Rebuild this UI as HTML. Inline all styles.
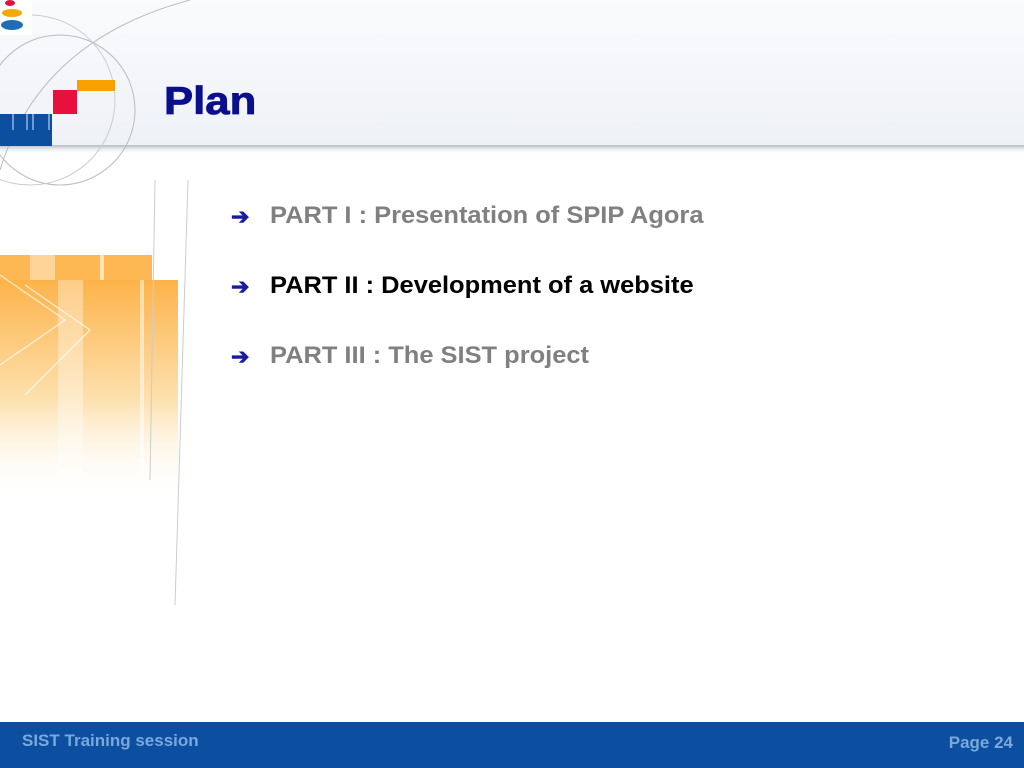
<!DOCTYPE html>
<html><head><style>
body{margin:0;width:1024px;height:768px;position:relative;overflow:hidden;background:#fff;font-family:"Liberation Sans",Arial,sans-serif}
.hdr{position:absolute;left:0;top:0;width:1024px;height:147px;background:linear-gradient(#fafbfd,#eef1f6);}
.sh{position:absolute;left:0;top:145px;width:1024px;height:8px;background:linear-gradient(#b8bcc4,#e8eaee 50%,#fff)}
.t{position:absolute;left:164px;top:80px;font-size:39px;font-weight:bold;color:#0a0f8c;transform:scaleX(1.12);transform-origin:left;-webkit-text-stroke:0.8px #0a0f8c}
.item{position:absolute;left:270px;font-size:24px;font-weight:bold;transform:scaleX(1.06);transform-origin:left;white-space:nowrap}
.a{position:absolute;left:231px;color:#1a1aa0;font-size:22px;font-weight:bold}
.ft{position:absolute;left:0;top:722px;width:1024px;height:46px;background:#0c4fa0}
.ft span{position:absolute;top:9px;color:#7aa8dc;font-size:17px;font-weight:bold}
</style></head><body>
<div class="hdr"></div>
<div class="sh"></div>
<svg style="position:absolute;left:0;top:0" width="300" height="620">
<defs><linearGradient id="o" x1="0" y1="0" x2="0" y2="1"><stop offset="0" stop-color="#fdb34a"/><stop offset="0.55" stop-color="#fde1b0"/><stop offset="1" stop-color="#fff" stop-opacity="0"/></linearGradient></defs>
<rect x="0" y="255" width="152" height="25" fill="#fdb854"/>
<rect x="0" y="280" width="178" height="220" fill="url(#o)"/>
<rect x="58" y="280" width="25" height="200" fill="#fff" opacity="0.35"/>
<rect x="30" y="255" width="25" height="25" fill="#fff" opacity="0.4"/>
<rect x="100" y="255" width="4" height="25" fill="#fff" opacity="0.6"/>
<rect x="140" y="280" width="4" height="200" fill="#fff" opacity="0.5"/>
<path d="M0 275 L65 320 L0 365 M25 285 L90 330 L25 395" stroke="#fff" stroke-width="1.3" fill="none" opacity="0.7"/>
<path d="M155 180 L150 480 M188 180 L175 605" stroke="#ccc" stroke-width="1" fill="none"/>
<circle cx="60" cy="110" r="75" stroke="#bbb" fill="none"/>
<circle cx="30" cy="100" r="85" stroke="#ccc" fill="none"/>
<path d="M0 170 Q40 40 190 0" stroke="#bbb" fill="none"/>
<rect x="0" y="0" width="32" height="35" fill="#fff"/>
<ellipse cx="12" cy="13" rx="10" ry="4" fill="#f5a800"/>
<ellipse cx="12" cy="25" rx="11" ry="5" fill="#1e6db5"/>
<ellipse cx="10" cy="3" rx="5" ry="3" fill="#e01040"/>
<rect x="53" y="90" width="24" height="24" fill="#e8103c"/>
<rect x="77" y="80" width="38" height="11" fill="#f6a100"/>
<rect x="0" y="114" width="52" height="32" fill="#0c4fa0"/>
<rect x="12" y="114" width="2" height="16" fill="#6d9cd4"/><rect x="26" y="114" width="2" height="16" fill="#6d9cd4"/><rect x="32" y="114" width="2" height="16" fill="#6d9cd4"/><rect x="48" y="114" width="2" height="16" fill="#6d9cd4"/>
</svg>
<div class="t">Plan</div>
<div class="a" style="top:204px">➔</div>
<div class="a" style="top:274px">➔</div>
<div class="a" style="top:344px">➔</div>
<div class="item" style="top:202px;color:#808080">PART I : Presentation of SPIP Agora</div>
<div class="item" style="top:272px;color:#000">PART II : Development of a website</div>
<div class="item" style="top:342px;color:#808080">PART III : The SIST project</div>
<div class="ft"><span style="left:22px">SIST Training session</span><span style="right:11px;top:11px">Page 24</span></div>
</body></html>
